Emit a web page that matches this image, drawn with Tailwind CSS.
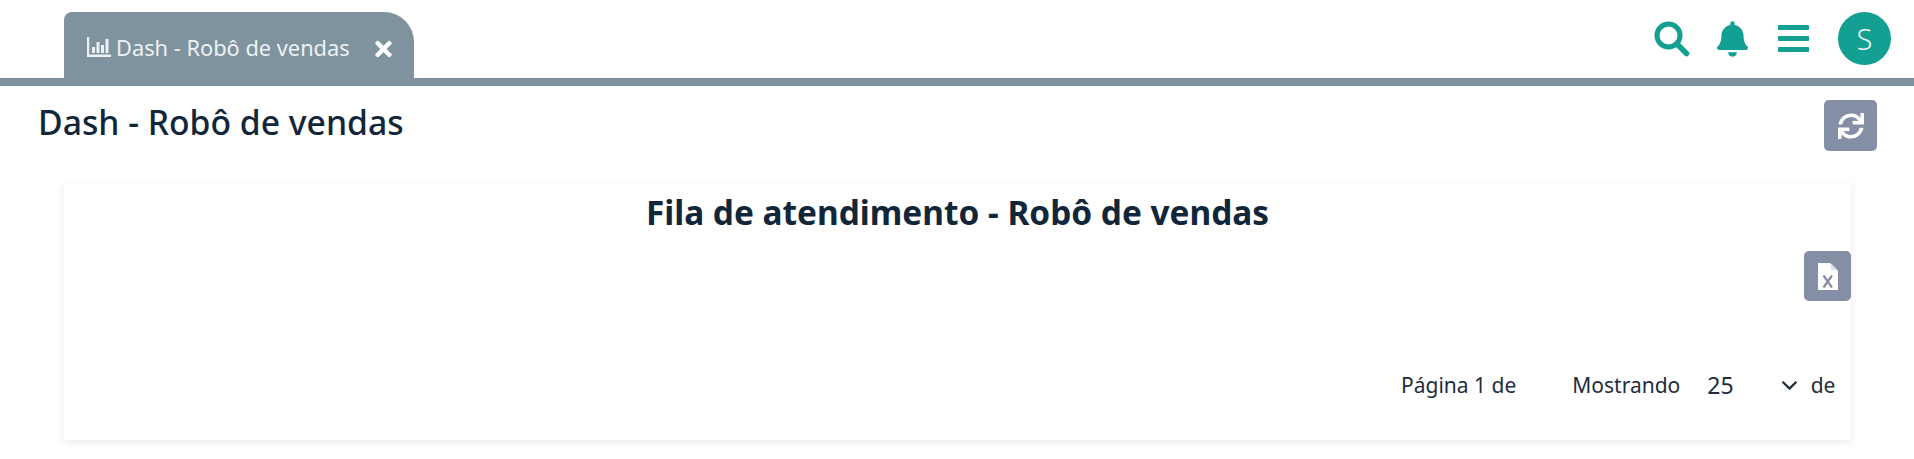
<!DOCTYPE html>
<html lang="pt-BR">
<head>
<meta charset="utf-8">
<title>Dash - Robô de vendas</title>
<script src="https://cdn.jsdelivr.net/npm/@tailwindcss/browser@4"></script>
</head>
<body class="bg-white overflow-hidden font-['Noto_Sans','Open_Sans',sans-serif] text-[#12263a]">
<div class="w-[1914px] h-[459px] flex flex-col">
  <header class="h-[86px] shrink-0 border-b-[8px] border-[#7f939e] flex justify-between">
    <div class="pl-[64px] pt-[12px] h-[78px]">
      <div class="w-[350px] h-[66px] bg-[#7f939e] rounded-tl-[8px] rounded-tr-[30px] flex items-start pl-[23px] pt-[21px] text-[#eef1f2]">
        <svg viewBox="0 0 24 20" class="w-[24px] h-[20px] mt-[4px] shrink-0" fill="#eef1f2"><path d="M0 0h2.2v17.6H24V20H0z"/><rect x="5" y="10" width="3" height="6"/><rect x="9.5" y="5" width="3" height="11"/><rect x="14" y="8" width="3" height="8"/><rect x="18.5" y="2" width="3" height="14"/></svg>
        <span class="ml-[5px] text-[21.8px] leading-[30px] whitespace-nowrap">Dash - Robô de vendas</span>
        <svg viewBox="0 0 352 512" class="w-[17px] h-[24px] ml-[25px] mt-[4px] shrink-0" fill="#fff"><path d="M242.72 256l100.07-100.07c12.28-12.28 12.28-32.19 0-44.48l-22.24-22.24c-12.28-12.28-32.19-12.28-44.48 0L176 189.28 75.93 89.21c-12.28-12.28-32.19-12.28-44.48 0L9.21 111.45c-12.28 12.28-12.28 32.19 0 44.48L109.28 256 9.21 356.07c-12.28 12.28-12.28 32.19 0 44.48l22.24 22.24c12.28 12.28 32.2 12.28 44.48 0L176 322.72l100.07 100.07c12.28 12.28 32.2 12.28 44.48 0l22.24-22.24c12.28-12.28 12.28-32.19 0-44.48L242.72 256z"/></svg>
      </div>
    </div>
    <div class="flex items-start pt-[12px] pr-[23px]">
      <svg viewBox="0 0 36 36" class="w-[36px] h-[36px] mt-[9px]" fill="none" stroke="#13a093"><circle cx="14.5" cy="14.5" r="11.5" stroke-width="5"/><path d="M23.5 23.5 L32.5 32.5" stroke-width="5.5" stroke-linecap="round"/></svg>
      <svg viewBox="0 0 448 512" class="w-[31px] h-[36px] ml-[27px] mt-[9px]" fill="#13a093"><path d="M224 512c35.32 0 63.97-28.65 63.97-64H160.03c0 35.35 28.65 64 63.97 64zm215.39-149.71c-19.32-20.76-55.47-51.99-55.47-154.29 0-77.7-54.48-139.9-127.94-155.16V32c0-17.67-14.32-32-31.98-32s-31.98 14.33-31.98 32v20.84C118.56 68.1 64.08 130.3 64.08 208c0 102.3-36.15 133.53-55.47 154.29-6 6.45-8.66 14.16-8.61 21.71.11 16.4 12.98 32 32.1 32h383.8c19.12 0 32-15.6 32.1-32 .05-7.55-2.61-15.27-8.61-21.71z"/></svg>
      <div class="w-[31px] ml-[30px] mt-[13px] flex flex-col gap-[6px]">
        <div class="h-[5px] bg-[#13a093] rounded-[1px]"></div>
        <div class="h-[5px] bg-[#13a093] rounded-[1px]"></div>
        <div class="h-[5px] bg-[#13a093] rounded-[1px]"></div>
      </div>
      <div class="w-[53px] h-[53px] ml-[29px] rounded-full bg-[#13a093] text-[#e9f3f1] flex items-center justify-center text-[29px] font-light leading-none">S</div>
    </div>
  </header>

  <div class="flex justify-between items-start h-[97px] shrink-0 pl-[38px] pr-[37px]">
    <h1 class="text-[33.7px] leading-[44px] font-medium mt-[14px] whitespace-nowrap">Dash - Robô de vendas</h1>
    <button class="w-[53px] h-[51px] mt-[14px] rounded-[5px] bg-[#848fa5] flex items-center justify-center">
      <svg viewBox="0 0 512 512" class="w-[26px] h-[26px]" fill="#fff"><path d="M440.65 12.57l4 82.77A247.16 247.16 0 0 0 255.83 8C134.73 8 33.91 94.92 12.29 209.82A12 12 0 0 0 24.09 224h49.05a12 12 0 0 0 11.67-9.26 175.91 175.91 0 0 1 317-56.94l-101.46-4.86a12 12 0 0 0-12.57 12v47.41a12 12 0 0 0 12 12H500a12 12 0 0 0 12-12V12a12 12 0 0 0-12-12h-47.37a12 12 0 0 0-11.98 12.57zM255.83 432a175.61 175.61 0 0 1-146-77.8l101.8 4.87a12 12 0 0 0 12.57-12v-47.4a12 12 0 0 0-12-12H12a12 12 0 0 0-12 12V500a12 12 0 0 0 12 12h47.35a12 12 0 0 0 12-12.6l-4.15-82.57A247.17 247.17 0 0 0 255.83 504c121.11 0 221.93-86.92 243.55-201.82a12 12 0 0 0-11.8-14.18h-49.05a12 12 0 0 0-11.67 9.26A175.86 175.86 0 0 1 255.83 432z"/></svg>
    </button>
  </div>

  <section class="ml-[64px] w-[1787px] h-[257px] bg-white shadow-[0_2px_8px_rgba(0,0,0,0.09)] flex flex-col">
    <h2 class="text-[33.4px] leading-[44px] font-bold text-center mt-[7px] whitespace-nowrap">Fila de atendimento - Robô de vendas</h2>
    <div class="flex justify-end mt-[17px]">
      <button class="w-[47px] h-[50px] rounded-[5px] bg-[#848fa5] flex items-center justify-center">
        <svg viewBox="0 0 20 27" class="w-[20px] h-[27px]"><path d="M0 0h12l8 8v19H0z" fill="#fff"/><path d="M13 0.5 19.5 7H13z" fill="#dbe2ea"/><path d="M5.5 12.5 L14 24.5 M14 12.5 L5.5 24.5" stroke="#848fa5" stroke-width="2.2" fill="none"/></svg>
      </button>
    </div>
    <div class="flex items-center mt-[71px] h-[27px] text-[21px] text-[#1f2d3d] whitespace-nowrap">
      <span class="ml-[1337px]">Página 1 de</span>
      <span class="ml-[56px]">Mostrando</span>
      <span class="ml-[27px] text-[23px]">25</span>
      <svg viewBox="0 0 16 10" class="w-[17px] h-[11px] ml-[47px]" fill="none" stroke="#1f2d3d" stroke-width="2.2"><path d="M1.5 1.5 8 8l6.5-6.5"/></svg>
      <span class="ml-[13px]">de</span>
    </div>
  </section>
</div>
</body>
</html>
